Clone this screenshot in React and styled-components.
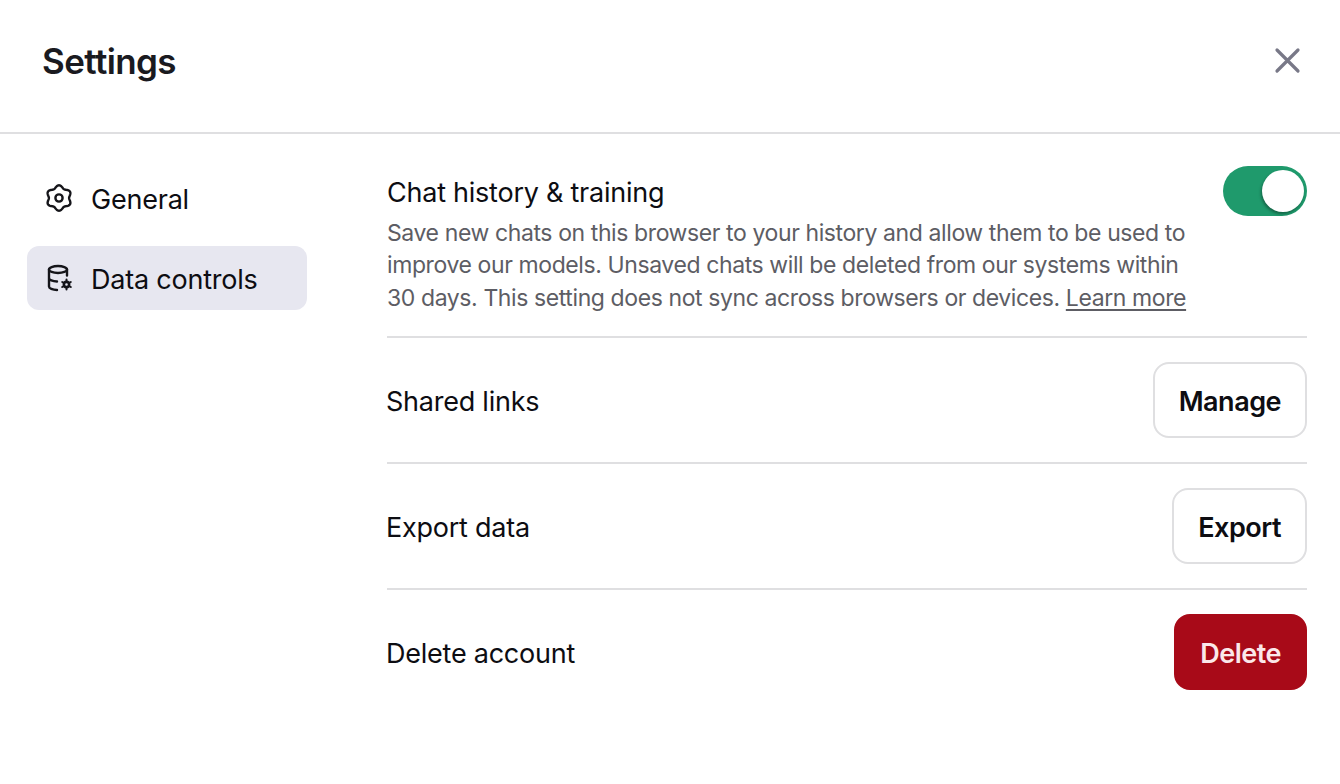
import React from "react";
import styled, { createGlobalStyle } from "styled-components";

const Global = createGlobalStyle`
  html, body { margin: 0; padding: 0; background: #fff; }
  body { font-family: Inter, "Liberation Sans", sans-serif; color: #0d0d12; }
  * { box-sizing: border-box; }
`;

const Page = styled.div`
  width: 1340px;
  height: 784px;
  overflow: hidden;
  background: #fff;
`;

const Header = styled.header`
  height: 134px;
  padding: 0 38px 0 42px;
  display: flex;
  align-items: center;
  justify-content: space-between;
  border-bottom: 2px solid #dfdfe1;
`;

const Title = styled.h1`
  margin: 0 0 10px;
  font-size: 35px;
  line-height: 44px;
  font-weight: 600;
  letter-spacing: -0.6px;
  color: #1a1a1f;
`;

const Close = styled.button`
  width: 30px;
  height: 30px;
  padding: 0;
  margin-bottom: 12px;
  border: 0;
  background: none;
  display: flex;
  align-items: center;
  justify-content: center;
`;

const Body = styled.div`
  display: flex;
  padding: 32px 33px 0 27px;
`;

const Sidebar = styled.nav`
  width: 280px;
  margin-right: 80px;
  display: flex;
  flex-direction: column;
  gap: 16px;
`;

const NavItem = styled.div`
  height: 64px;
  padding: 0 18px;
  border-radius: 12px;
  display: flex;
  align-items: center;
  gap: 18px;
  background: ${(p) => (p.$active ? "#e7e7f0" : "transparent")};
`;

const NavLabel = styled.span`
  margin-top: 2px;
  font-size: 27px;
  letter-spacing: -0.22px;
  color: #0d0d12;
`;

const Content = styled.main`
  flex: 1;
  min-width: 0;
`;

const TopRow = styled.section`
  display: flex;
  justify-content: space-between;
  gap: 30px;
  height: 172px;
  border-bottom: 2px solid #dfdfe1;
`;

const TopText = styled.div`
  width: 806px;
`;

const RowTitle = styled.div`
  font-size: 27px;
  line-height: 54px;
  letter-spacing: -0.24px;
  color: #0d0d12;
`;

const Description = styled.p`
  margin: -3px 0 0;
  font-size: 23px;
  line-height: 32.3px;
  letter-spacing: -0.4px;
  color: #5d5d64;
`;

const LearnMore = styled.a`
  color: #5d5d64;
  text-decoration: underline;
  text-underline-offset: 3px;
`;

const Toggle = styled.div`
  width: 84px;
  height: 50px;
  flex: none;
  border-radius: 25px;
  background: #1f9a6c;
  display: flex;
  align-items: center;
  justify-content: flex-end;
  padding-right: 3px;
`;

const Knob = styled.span`
  width: 42px;
  height: 42px;
  border-radius: 50%;
  background: #fff;
  box-shadow: -1px 2px 3px rgba(0, 0, 0, 0.35);
`;

const Row = styled.section`
  height: 126px;
  display: flex;
  align-items: center;
  justify-content: space-between;
  border-bottom: ${(p) => (p.$last ? "0" : "2px solid #dfdfe1")};
  padding-bottom: ${(p) => (p.$last ? "2px" : "0")};
`;

const RowLabel = styled.span`
  margin-top: 2px;
  font-size: 27px;
  letter-spacing: -0.24px;
  color: #0d0d12;
  margin-left: -1px;
`;

const Button = styled.button`
  height: 76px;
  padding: 2px 24px 0;
  border-radius: 16px;
  font: 600 27px Inter, "Liberation Sans", sans-serif;
  letter-spacing: -0.5px;
  color: ${(p) => (p.$danger ? "#fbe8ea" : "#0d0d12")};
  background: ${(p) => (p.$danger ? "#a80a18" : "#fff")};
  border: 2px solid ${(p) => (p.$danger ? "#a80a18" : "#dfdfe1")};
`;

const gearPath = () => {
  const pts = [];
  for (let i = 0; i < 120; i++) {
    const a = (i / 120) * Math.PI * 2;
    const r = 11.4 + 1.3 * Math.cos(6 * (a - Math.PI / 2));
    pts.push(`${(14 + r * Math.cos(a)).toFixed(2)} ${(14 + r * Math.sin(a)).toFixed(2)}`);
  }
  return `M${pts.join("L")}Z`;
};

const GearIcon = () => (
  <svg width="28" height="28" viewBox="0 0 28 28" fill="none" stroke="#15151a" strokeWidth="2.4" strokeLinejoin="round">
    <path d={gearPath()} />
    <circle cx="14" cy="14" r="3.6" />
  </svg>
);

const DataIcon = () => (
  <svg width="28" height="28" viewBox="-1 0 28 28" fill="none" stroke="#15151a" strokeWidth="2.4" strokeLinecap="round">
    <ellipse cx="12" cy="5.5" rx="9" ry="3.5" />
    <path d="M21 5.5v6M3 5.5v17c0 1.9 3.6 3.5 8 3.5M3 14c0 1.9 3.6 3.5 8 3.5" />
    <circle cx="20.5" cy="20.5" r="2.6" strokeWidth="2.6" />
    <path strokeWidth="2" d="M20.5 15.5v2M20.5 23.5v2M16.2 18l1.7 1M23.1 22l1.7 1M16.2 23l1.7-1M23.1 19l1.7-1" />
  </svg>
);

const CloseIcon = () => (
  <svg width="30" height="30" viewBox="0 0 30 30" fill="none" stroke="#787887" strokeWidth="3.2" strokeLinecap="round">
    <path d="M5 5l21 21M26 5L5 26" />
  </svg>
);

export default function App() {
  return (
    <Page>
      <Global />
      <Header>
        <Title>Settings</Title>
        <Close aria-label="Close"><CloseIcon /></Close>
      </Header>
      <Body>
        <Sidebar>
          <NavItem><GearIcon /><NavLabel>General</NavLabel></NavItem>
          <NavItem $active><DataIcon /><NavLabel>Data controls</NavLabel></NavItem>
        </Sidebar>
        <Content>
          <TopRow>
            <TopText>
              <RowTitle>Chat history &amp; training</RowTitle>
              <Description>
                Save new chats on this browser to your history and allow them to be used to improve our models. Unsaved chats will be deleted from our systems within 30 days. This setting does not sync across browsers or devices. <LearnMore>Learn more</LearnMore>
              </Description>
            </TopText>
            <Toggle><Knob /></Toggle>
          </TopRow>
          <Row><RowLabel>Shared links</RowLabel><Button>Manage</Button></Row>
          <Row><RowLabel>Export data</RowLabel><Button>Export</Button></Row>
          <Row $last><RowLabel>Delete account</RowLabel><Button $danger>Delete</Button></Row>
        </Content>
      </Body>
    </Page>
  );
}
